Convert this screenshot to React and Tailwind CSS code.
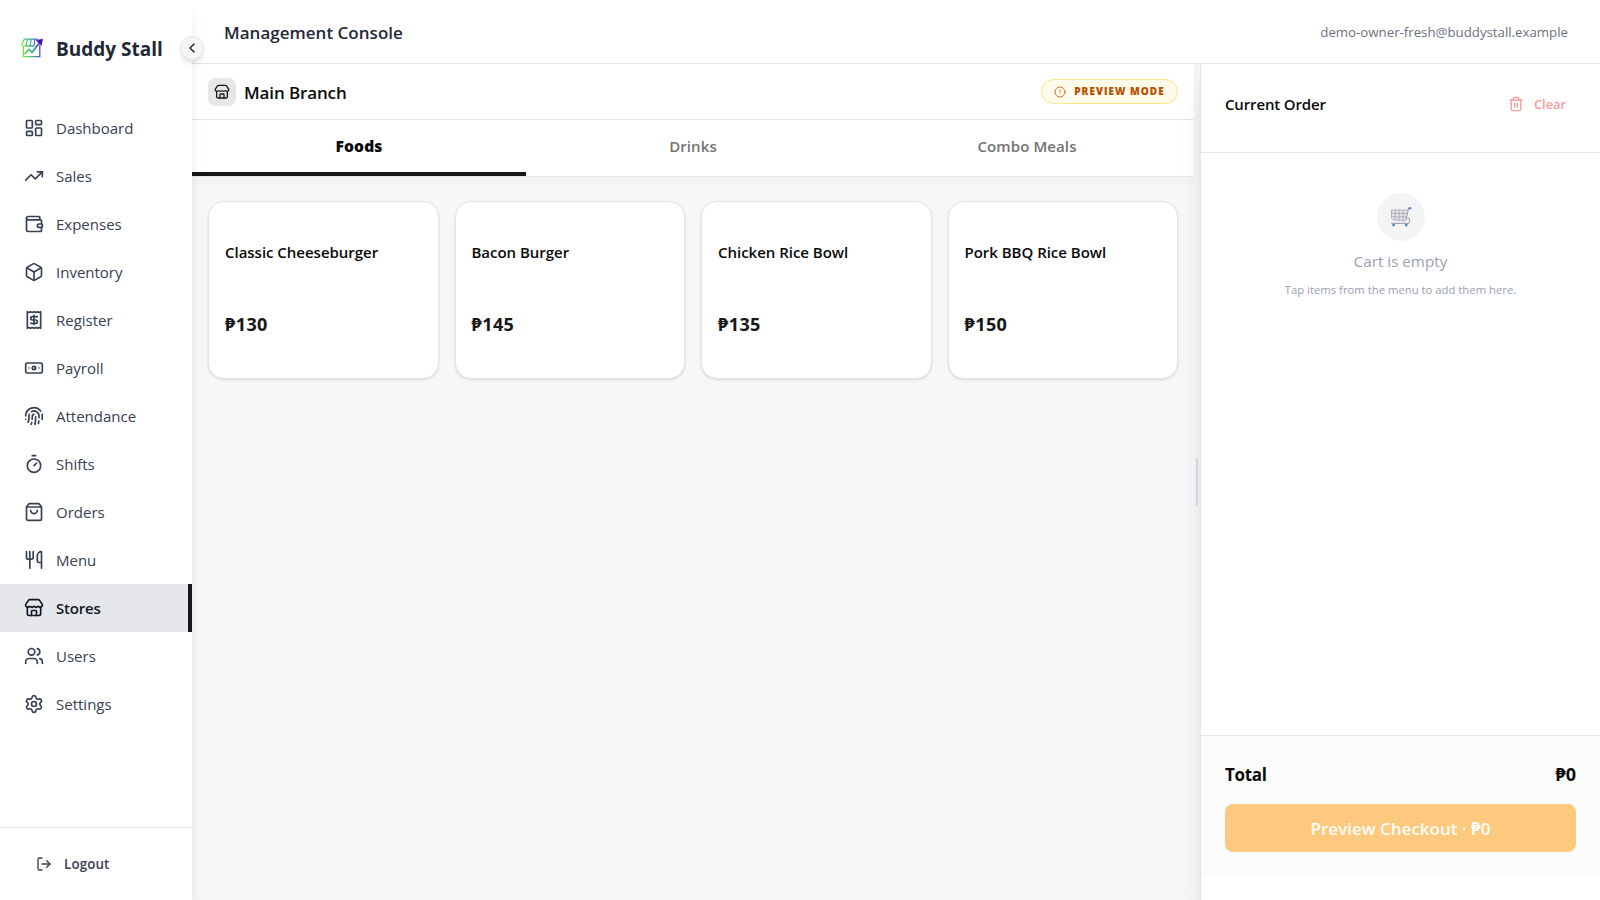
import React from "react";
import {
  LayoutDashboard, TrendingUp, Wallet, Box, Receipt, Banknote, Fingerprint, Timer,
  ShoppingBag, Utensils, Store, Users, Settings, LogOut, ChevronLeft, CircleAlert, Trash2,
} from "lucide-react";

const NAV = [
  { label: "Dashboard", icon: LayoutDashboard },
  { label: "Sales", icon: TrendingUp },
  { label: "Expenses", icon: Wallet },
  { label: "Inventory", icon: Box },
  { label: "Register", icon: Receipt },
  { label: "Payroll", icon: Banknote },
  { label: "Attendance", icon: Fingerprint },
  { label: "Shifts", icon: Timer },
  { label: "Orders", icon: ShoppingBag },
  { label: "Menu", icon: Utensils },
  { label: "Stores", icon: Store, active: true },
  { label: "Users", icon: Users },
  { label: "Settings", icon: Settings },
];

const TABS = ["Foods", "Drinks", "Combo Meals"];

const ITEMS = [
  { name: "Classic Cheeseburger", price: "₱130" },
  { name: "Bacon Burger", price: "₱145" },
  { name: "Chicken Rice Bowl", price: "₱135" },
  { name: "Pork BBQ Rice Bowl", price: "₱150" },
];

function Logo() {
  return (
    <svg width="24" height="24" viewBox="0 0 24 24" fill="none" stroke="url(#brand)" strokeWidth="1.2" strokeLinejoin="round" strokeLinecap="round">
      <defs>
        <linearGradient id="brand" x1="1" y1="14" x2="23" y2="10" gradientUnits="userSpaceOnUse">
          <stop offset="0" stopColor="#8ee33c" />
          <stop offset="0.4" stopColor="#3fbf7f" />
          <stop offset="0.7" stopColor="#4a6fd0" />
          <stop offset="1" stopColor="#5a1fc0" />
        </linearGradient>
      </defs>
      <path d="M4.2 3.2h13M4.2 3.2L1.8 8.2c0 2.6 3.8 2.8 4.2.2.2 2.6 4 2.6 4.2 0 .2 2.6 4 2.6 4.2 0M7.6 3.4L6 8.4M11.2 3.4l-1 5M14.6 3.4l-.2 5" />
      <path d="M3.4 10.8v9.9h16.4v-11" strokeWidth="1.3" />
      <path d="M5 17.6l4.1-4.2 2.9 3 7.6-9.6" strokeWidth="1.8" />
      <path d="M16.6 4.4l5.8-1.2-1 5.8z" fill="#4214b4" stroke="#4214b4" strokeWidth="0.8" />
    </svg>
  );
}

function Cart() {
  return (
    <svg width="22" height="22" viewBox="0 0 22 22" fill="none" className="opacity-80">
      <path d="M1.5 4.2h16L15.8 15l-13-1.2-1.3-2z" fill="#e4e2e8" />
      <path d="M1.2 4h16.4M1.5 4v8.2l1.6 1.6 12.4 1M1.6 7.4h15.2M1.6 10.8h14.8M5.2 4v9.8M9.2 4v10.2M13 4v10.4" stroke="#96919f" strokeWidth="0.8" />
      <path d="M18.6 2.2L15.6 14.8M16.4 11.8c4.4-.6 3.6 5.6 1.2 5.6H1.2" stroke="#96919f" strokeWidth="1.2" />
      <path d="M18.4 1.2h2.8v2h-2.8zM2.4 18h2.4v2.2H2.4zM15 18h2.4v2.2H15z" fill="#2563b8" />
    </svg>
  );
}

function Sidebar() {
  return (
    <aside className="relative z-20 flex h-full w-48 shrink-0 flex-col bg-white shadow-[0_10px_15px_-3px_rgba(0,0,0,0.1),0_4px_6px_-4px_rgba(0,0,0,0.1)]">
      <div className="flex h-24 items-center gap-3 pl-5">
        <Logo />
        <span className="pt-0.5 text-[19px] font-bold text-[#1f2937]">Buddy Stall</span>
      </div>
      <button className="absolute top-9 -right-3 flex size-6 items-center justify-center rounded-full border border-[#e5e7eb] bg-[#f5f5f5] text-[#171717] shadow-md">
        <ChevronLeft size={16} />
      </button>
      <nav className="flex flex-1 flex-col pt-2">
        {NAV.map(({ label, icon: Icon, active }) => (
          <a
            key={label}
            className={
              active
                ? "flex h-12 items-center gap-3 border-r-4 border-[#171717] bg-[#e5e7eb] pl-6 text-[15px] font-semibold tracking-[-0.2px] text-[#111827]"
                : "flex h-12 items-center gap-3 pl-6 text-[15px] text-[#374151]"
            }
          >
            <Icon size={20} />
            <span>{label}</span>
          </a>
        ))}
      </nav>
      <div className="flex h-[73px] items-center gap-3 border-t border-[#e5e5e5] pl-9 text-[13.4px] font-semibold text-[#374151]">
        <LogOut size={16} />
        <span className="tracking-[0.1px]">Logout</span>
      </div>
    </aside>
  );
}

function MenuPanel() {
  return (
    <section className="flex min-w-0 flex-1 flex-col">
      <div className="flex h-14 items-center border-b border-[#e5e5e5] bg-white px-4">
        <span className="flex size-7 items-center justify-center rounded-lg bg-[#e7e7e7] text-[#171717]">
          <Store size={16} />
        </span>
        <h2 className="ml-2 pt-0.5 text-[17px] font-semibold tracking-[-0.12px] text-[#0a0a0a]">Main Branch</h2>
        <span className="ml-auto flex h-[25px] w-[137px] items-center justify-center gap-2 rounded-full border border-[#fee685] bg-[#fffbeb] text-[10px] font-extrabold tracking-[1.05px] whitespace-nowrap text-[#bb4d00]">
          <CircleAlert size={12} className="opacity-80" />
          PREVIEW MODE
        </span>
      </div>
      <div className="flex h-[57px] border-b border-[#e5e5e5] bg-white">
        {TABS.map((t, i) => (
          <button
            key={t}
            className={
              i === 0
                ? "flex-1 border-b-4 border-[#171717] pt-0.5 text-[15.6px] font-extrabold tracking-[0.1px] text-[#0a0a0a]"
                : "flex-1 border-b-4 border-transparent text-[15px] font-semibold tracking-[0.1px] text-[#737373]"
            }
          >
            {t}
          </button>
        ))}
      </div>
      <div className="h-2 bg-[#f2f3f4]" />
      <div className="grid grid-cols-4 gap-4 px-4 pt-4">
        {ITEMS.map((it) => (
          <div key={it.name} className="flex h-[178px] flex-col rounded-2xl border border-[#e5e5e5] bg-white px-4 pt-[38px] shadow-[0_1px_3px_rgba(0,0,0,0.1),0_1px_2px_-1px_rgba(0,0,0,0.1)]">
            <span className="text-[15px] leading-6 font-semibold tracking-[-0.02px] text-[#0a0a0a]">{it.name}</span>
            <span className="mt-[46px] text-[18px] leading-7 font-bold tracking-[0.4px] text-[#171717]">{it.price}</span>
          </div>
        ))}
      </div>
    </section>
  );
}

function OrderPanel() {
  return (
    <aside className="relative z-10 flex w-[400px] shrink-0 flex-col border-l border-[#e5e5e5] bg-white shadow-[0_20px_25px_-5px_rgba(0,0,0,0.1),0_8px_10px_-6px_rgba(0,0,0,0.1)]">
      <div className="flex h-[89px] items-start justify-between border-b border-[#e5e5e5] px-6 pt-7">
        <h3 className="text-[15px] leading-6 font-semibold tracking-[-0.15px] text-[#0a0a0a]">Current Order</h3>
        <button className="flex h-6 items-center gap-2.5 pr-2.5 text-[13px] font-semibold text-[#fb9a9d]">
          <Trash2 size={16} />
          <span className="pt-px tracking-[-0.1px]">Clear</span>
        </button>
      </div>
      <div className="flex flex-1 flex-col items-center pt-10">
        <span className="flex size-12 items-center justify-center rounded-full bg-[#f3f4f6]">
          <Cart />
        </span>
        <p className="mt-2 text-[15.2px] leading-6 text-[#99a1af]">Cart is empty</p>
        <p className="mt-[9px] text-[11.3px] leading-4 text-[#99a1af]">Tap items from the menu to add them here.</p>
      </div>
      <div className="mb-6 flex h-[141px] flex-col border-t border-[#e5e5e5] bg-[#fcfcfc] px-6 pt-[25px]">
        <div className="flex items-center justify-between text-[17px] leading-7 font-bold text-[#0a0a0a]">
          <span className="tracking-[-0.3px]">Total</span>
          <span className="pb-0.5 text-[18px] leading-[26px]">₱0</span>
        </div>
        <button className="mt-[15px] h-12 rounded-lg bg-[#fdc97e] pt-0.5 text-[17px] font-semibold text-[#fffdf8]">
          Preview Checkout · ₱0
        </button>
      </div>
    </aside>
  );
}

export default function App() {
  return (
    <div className="flex h-[900px] w-[1600px] overflow-hidden bg-[#f6f7f9] font-['Open_Sans','Noto_Sans',sans-serif]">
      <Sidebar />
      <div className="flex min-w-0 flex-1 flex-col">
        <header className="relative z-[15] flex h-16 shrink-0 items-center justify-between border-b border-[#e5e5e5] bg-white px-8">
          <h1 className="pt-0.5 text-[17px] font-semibold tracking-[0.02px] text-[#1f2937]">Management Console</h1>
          <span className="pt-0.5 text-[13.25px] text-[#6b7280]">demo-owner-fresh@buddystall.example</span>
        </header>
        <main className="flex min-h-0 flex-1 overflow-hidden">
          <MenuPanel />
          <div className="flex w-1.5 shrink-0 items-center justify-center bg-[#f3f4f6]">
            <span className="relative z-20 h-12 w-0.5 rounded-full bg-[#d1d5db]" />
          </div>
          <OrderPanel />
        </main>
      </div>
    </div>
  );
}
